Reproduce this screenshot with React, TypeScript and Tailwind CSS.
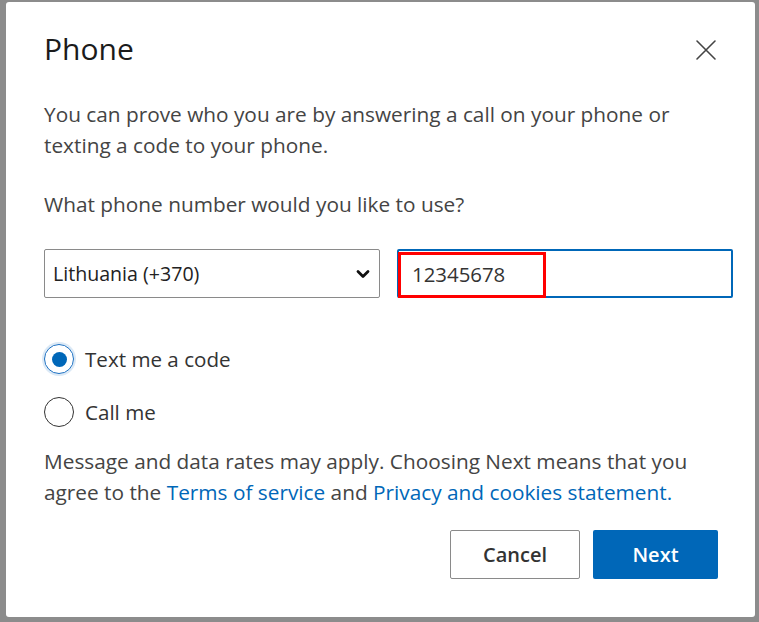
import React, { useState } from 'react';

const font = { fontFamily: '"Open Sans", "Noto Sans", Arial, sans-serif' };

const CloseIcon = () => (
  <svg width="22" height="22" viewBox="0 0 22 22" fill="none" stroke="#444" strokeWidth="1.6" strokeLinecap="round">
    <path d="M2 2 L20 20 M20 2 L2 20" />
  </svg>
);

const Chevron = () => (
  <svg width="14" height="10" viewBox="0 0 14 10" fill="none" stroke="#111" strokeWidth="2.8" strokeLinecap="round" strokeLinejoin="round">
    <path d="M2 2.5 L7 7.5 L12 2.5" />
  </svg>
);

const Radio: React.FC<{ checked: boolean; label: string; onClick: () => void }> = ({ checked, label, onClick }) => (
  <button onClick={onClick} className="flex items-center h-[30px] text-left">
    {checked ? (
      <span className="w-[30px] h-[30px] rounded-full border-[1.5px] border-[#1a6fc2] ring-2 ring-[#dbe9f6] flex items-center justify-center">
        <span className="w-[15px] h-[15px] rounded-full bg-[#0067b8]" />
      </span>
    ) : (
      <span className="w-[30px] h-[30px] rounded-full border-[1.5px] border-[#333]" />
    )}
    <span className="ml-[11px] text-[20.6px] text-[#333] leading-[30px]">{label}</span>
  </button>
);

export default function App() {
  const [method, setMethod] = useState<'text' | 'call'>('text');
  const [phone, setPhone] = useState('12345678');

  return (
    <div className="w-[759px] h-[622px] bg-[#8c8c8c] pl-[6px] pt-[2px] pr-[4px] pb-[5px]" style={font}>
      <div className="h-full bg-white rounded-[3px] pl-[38px] pr-[22px] pt-[27px] flex flex-col">
        <div className="flex items-center justify-between h-[40px]">
          <h1 className="text-[30px] leading-[40px] text-[#1b1b1b]">Phone</h1>
          <button className="mr-[16px] mt-[2px]"><CloseIcon /></button>
        </div>

        <p className="mt-[30px] text-[20.8px] leading-[31px] text-[#444] pr-[30px]">
          You can prove who you are by answering a call on your phone or texting a code to your phone.
        </p>

        <p className="mt-[28px] text-[20.8px] leading-[31px] text-[#444]">
          What phone number would you like to use?
        </p>

        <div className="mt-[29px] flex gap-[17px]">
          <div className="w-[336px] h-[49px] border border-[#8a8a8a] rounded-[2px] flex items-center justify-between pl-[8px] pr-[9px]">
            <span className="text-[19.6px] text-[#222]">Lithuania (+370)</span>
            <Chevron />
          </div>
          <div className="w-[336px] h-[49px] border-2 border-[#0067b8] rounded-[2px] relative">
            <input
              value={phone}
              onChange={e => setPhone(e.target.value)}
              className="w-full h-full pl-[13px] text-[20.4px] text-[#333] outline-none bg-transparent"
            />
            <div className="absolute left-[-1px] top-[1px] w-[148px] h-[46px] border-[3px] border-[#ff0000] pointer-events-none" />
          </div>
        </div>

        <div className="mt-[46px] flex flex-col gap-[23px]">
          <Radio checked={method === 'text'} label="Text me a code" onClick={() => setMethod('text')} />
          <Radio checked={method === 'call'} label="Call me" onClick={() => setMethod('call')} />
        </div>

        <p className="mt-[19px] text-[20.8px] leading-[31px] text-[#444] pr-[30px]">
          Message and data rates may apply. Choosing Next means that you agree to the{' '}
          <span className="text-[#0067b8]">Terms of service</span> and{' '}
          <span className="text-[#0067b8]">Privacy and cookies statement.</span>
        </p>

        <div className="mt-[22px] flex justify-end gap-[13px] mr-[15px]">
          <button className="w-[130px] h-[49px] border border-[#8a8a8a] rounded-[2px] text-[20px] font-semibold text-[#333]">
            Cancel
          </button>
          <button className="w-[125px] h-[49px] bg-[#0067b8] rounded-[2px] text-[20px] font-semibold text-white">
            Next
          </button>
        </div>
      </div>
    </div>
  );
}
